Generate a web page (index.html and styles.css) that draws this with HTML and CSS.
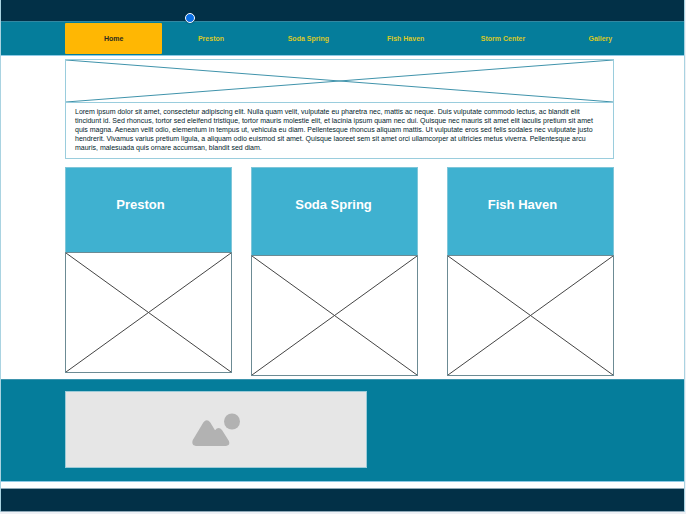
FILE: index.html
```html
<!DOCTYPE html>
<html lang="en">
<head>
<meta charset="utf-8">
<meta name="viewport" content="width=device-width, initial-scale=1">
<title>Home</title>
<link rel="stylesheet" href="styles.css">
</head>
<body>
<div class="page">
  <header class="topbar"><span class="marker"></span></header>
  <nav class="nav">
    <a class="tab active" href="#home">Home</a>
    <a class="tab" href="#preston">Preston</a>
    <a class="tab" href="#soda-spring">Soda Spring</a>
    <a class="tab" href="#fish-haven">Fish Haven</a>
    <a class="tab" href="#storm-center">Storm Center</a>
    <a class="tab" href="#gallery">Gallery</a>
  </nav>
  <main class="content">
    <section class="intro">
      <svg class="banner" viewBox="0 0 100 100" preserveAspectRatio="none" aria-hidden="true"><path d="M0 0L100 100M0 100L100 0"/></svg>
      <p class="copy">Lorem ipsum dolor sit amet, consectetur adipiscing elit. Nulla quam velit, vulputate eu pharetra nec, mattis ac neque. Duis vulputate commodo lectus, ac blandit elit<br>
tincidunt id. Sed rhoncus, tortor sed eleifend tristique, tortor mauris molestie elit, et lacinia ipsum quam nec dui. Quisque nec mauris sit amet elit iaculis pretium sit amet<br>
quis magna. Aenean velit odio, elementum in tempus ut, vehicula eu diam. Pellentesque rhoncus aliquam mattis. Ut vulputate eros sed felis sodales nec vulputate justo<br>
hendrerit. Vivamus varius pretium ligula, a aliquam odio euismod sit amet. Quisque laoreet sem sit amet orci ullamcorper at ultricies metus viverra. Pellentesque arcu<br>
mauris, malesuada quis ornare accumsan, blandit sed diam.</p>
    </section>
    <section class="cards">
      <article class="card short" id="preston">
        <h2 class="card-title">Preston</h2>
        <svg class="photo" viewBox="0 0 100 100" preserveAspectRatio="none" aria-hidden="true"><path d="M0 0L100 100M0 100L100 0"/></svg>
      </article>
      <article class="card middle" id="soda-spring">
        <h2 class="card-title">Soda Spring</h2>
        <svg class="photo" viewBox="0 0 100 100" preserveAspectRatio="none" aria-hidden="true"><path d="M0 0L100 100M0 100L100 0"/></svg>
      </article>
      <article class="card last" id="fish-haven">
        <h2 class="card-title">Fish Haven</h2>
        <svg class="photo" viewBox="0 0 100 100" preserveAspectRatio="none" aria-hidden="true"><path d="M0 0L100 100M0 100L100 0"/></svg>
      </article>
    </section>
  </main>
  <section class="feature" id="gallery">
    <div class="image-box">
      <svg class="image-icon" viewBox="0 0 48 34" width="48" height="34" aria-hidden="true">
        <circle cx="40" cy="8.5" r="8"/>
        <path d="M.8 27L11.3 9.5Q14.8 5.2 18.3 9.5L23 17.3Q26.5 12.8 30 17L36.9 28Q38.5 32.6 34 33H4Q-1 32.5.8 27Z"/>
      </svg>
    </div>
  </section>
  <footer class="footer"></footer>
</div>
</body>
</html>
```
FILE: styles.css
```css
* {
  box-sizing: border-box;
}

body {
  margin: 0;
  background: #eef1f6;
  font-family: "Liberation Sans", Arial, sans-serif;
  color: #021c2c;
}

.page {
  margin-right: 1px;
  background: #fff;
  border: solid #a9d3e1;
  border-width: 0 1px;
}

.topbar {
  position: relative;
  height: 21px;
  background: #023047;
}

.marker {
  position: absolute;
  top: 13px;
  left: 184px;
  width: 10px;
  height: 10px;
  border: 1px solid #fff;
  border-radius: 50%;
  background: #0b6fe4;
  box-shadow: 0 0 2px #023047;
}

.nav {
  display: grid;
  grid-template-columns: repeat(6, 1fr);
  height: 35px;
  padding: 1px 35px 1px 64px;
  background: #057d9b;
  border-top: 1px solid #3288a2;
  border-bottom: 1px solid #8ecae6;
}

.tab {
  display: flex;
  align-items: center;
  justify-content: center;
  border-radius: 1px;
  color: #d9c928;
  font-size: 7px;
  font-weight: bold;
  text-decoration: none;
}

.active {
  background: #ffb703;
  color: #2b2b20;
}

.content {
  padding: 3px 70px 3px 64px;
}

.intro {
  height: 100px;
  border: 1px solid #9acddd;
}

.banner {
  display: block;
  width: 100%;
  height: 43px;
  border-bottom: 1px solid #9acddd;
}

.banner path,
.photo path {
  fill: none;
  stroke: #3f93ab;
  stroke-width: 1px;
  vector-effect: non-scaling-stroke;
}

.copy {
  margin: 0;
  padding: 4px 9px;
  font-size: 7px;
  line-height: 9px;
  white-space: nowrap;
}

.cards {
  display: grid;
  grid-template-columns: 167fr 19fr 167fr 29fr 167fr;
  margin-top: 8px;
}

.card {
  height: 209px;
  display: flex;
  flex-direction: column;
}

.short {
  height: 206px;
}

.middle {
  grid-column: 3;
}

.last {
  grid-column: 5;
}

.card-title {
  flex: 1;
  margin: 0;
  padding: 29px 16px 0 0;
  border: 1px solid #7fc6d9;
  border-bottom: 0;
  background: #3fb1d0;
  color: #fff;
  font-size: 13px;
  line-height: 15px;
  text-align: center;
}

.middle .card-title {
  padding-right: 2px;
}

.photo {
  display: block;
  width: 100%;
  height: 121px;
  border: 1px solid #6c8b94;
}

.photo path {
  stroke: #444;
}

.feature {
  padding: 11px 64px 13px;
  background: #057d9b;
  border-top: 1px solid #3e94ad;
  border-bottom: 1px solid #8ecae6;
}

.image-box {
  display: flex;
  align-items: center;
  justify-content: center;
  width: 55%;
  max-width: 302px;
  height: 77px;
  background: #e6e6e6;
  border: 1px solid #9ccbd8;
}

.image-icon {
  fill: #b2b2b2;
}

.footer {
  height: 24px;
  margin-top: 6px;
  background: #023047;
  border: solid #8fa9b8;
  border-width: 1px 0;
}
```
